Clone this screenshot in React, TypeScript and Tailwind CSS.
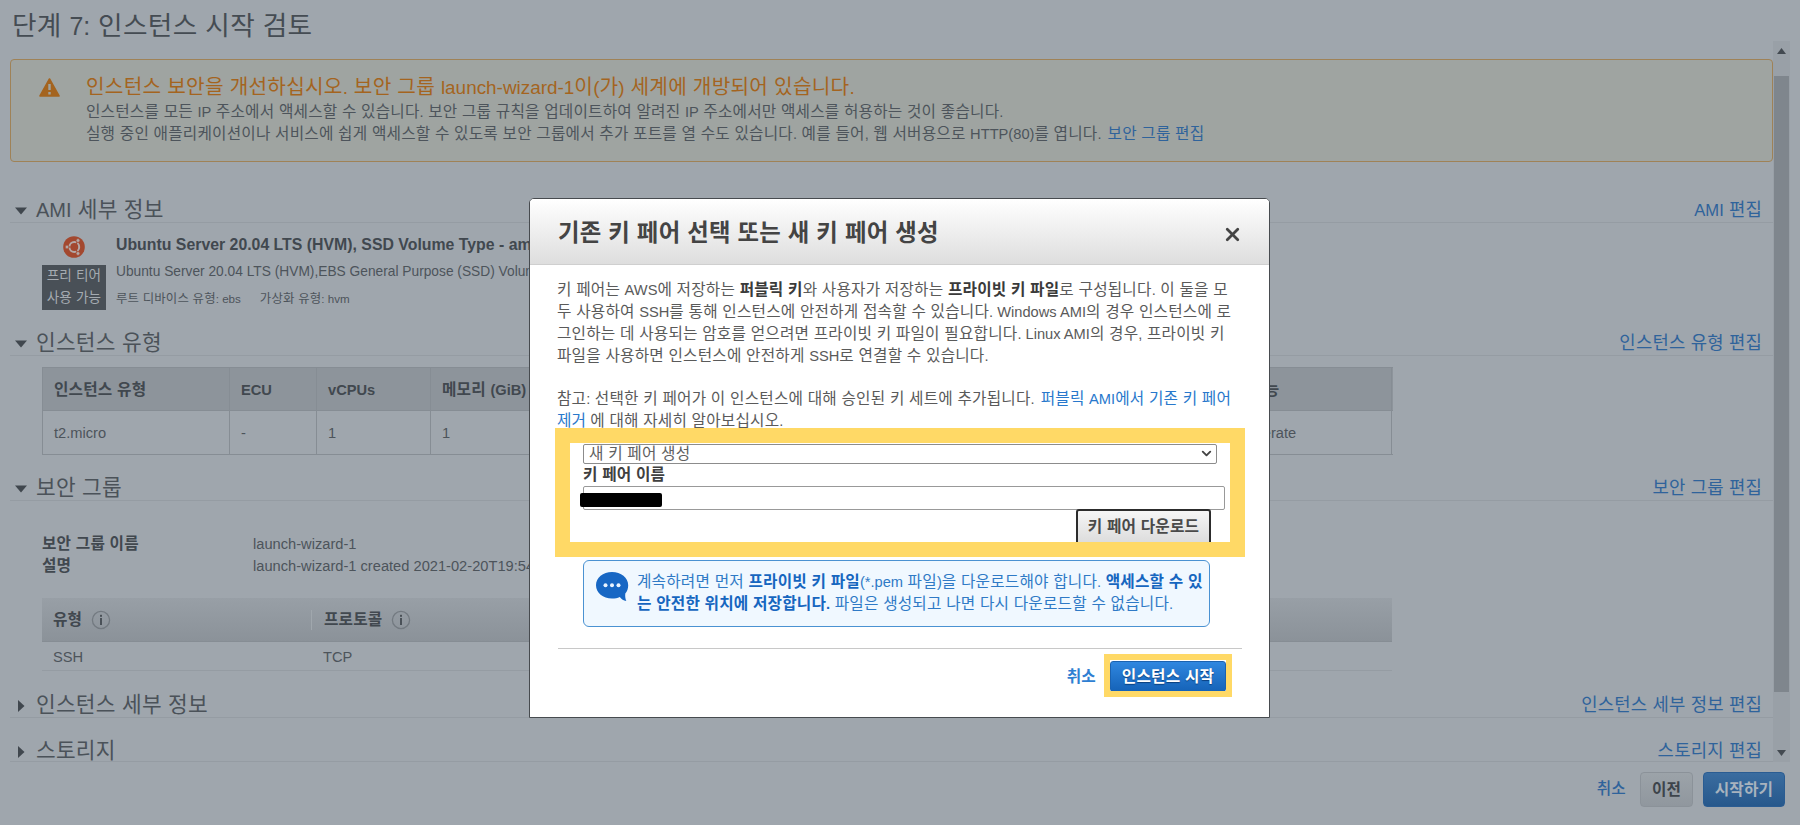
import type { ReactNode } from "react";
import { X, ChevronDown } from "lucide-react";

/** Mixed Korean / Latin text: Korean runs are set slightly larger than Latin ones. */
function T({ children, className = "" }: { children: string; className?: string }) {
  const runs = children.split(/([\x21-\x7e]+(?: [\x21-\x7e]+)*)/);
  return (
    <span className={`whitespace-pre ${className}`}>
      {runs.map((run, i) =>
        i % 2 ? (
          <span key={i}>{run}</span>
        ) : (
          <span key={i} className="text-[1.070em] leading-none tracking-[0.012em]">
            {run}
          </span>
        ),
      )}
    </span>
  );
}

function SectionHead({ title, link, open = false, className = "pt-[4px]" }: { title: string; link: string; open?: boolean; className?: string }) {
  return (
    <div className={`flex shrink-0 items-center justify-between border-b border-[#959ca3] pr-[11px] ${className}`}>
      <div className="flex items-center pl-[5px]">
        <svg width="12" height="12" viewBox="0 0 12 12" className="mr-[9px]" fill="#40474e">
          {open ? <path d="M0 2.5h12L6 9.5z" /> : <path d="M3 0l6.500 6L3 12z" />}
        </svg>
        <T className="text-[20px] text-[#4b5259]">{title}</T>
      </div>
      <T className="text-[16.600px] text-[#2f639b]">{link}</T>
    </div>
  );
}

function InfoIcon() {
  return (
    <svg width="20" height="20" viewBox="0 0 20 20" className="ml-[9px]">
      <circle cx="10" cy="10" r="8.600" fill="none" stroke="#737a81" strokeWidth="1.300" />
      <rect x="9" y="4.800" width="2" height="2" fill="#4a5158" />
      <rect x="9" y="8" width="2" height="7" fill="#4a5158" />
    </svg>
  );
}

function UbuntuIcon() {
  return (
    <svg width="22" height="22" viewBox="0 0 22 22">
      <circle cx="11" cy="11" r="10.800" fill="#a3482f" />
      <circle cx="11.300" cy="11" r="4.900" fill="none" stroke="#b3a8a6" strokeWidth="2" />
      <g stroke="#a3482f" strokeWidth="1.200">
        <path d="M11.300 11L4 11M11.300 11L15.300 4.200M11.300 11L15.300 17.800" />
      </g>
      <circle cx="11.300" cy="11" r="3.200" fill="#a3482f" />
      <g fill="#b3a8a6" stroke="#a3482f" strokeWidth="0.700">
        <circle cx="4" cy="11" r="1.900" />
        <circle cx="15" cy="4.500" r="1.900" />
        <circle cx="15" cy="17.500" r="1.900" />
      </g>
    </svg>
  );
}

function Cell({ children, className = "" }: { children?: ReactNode; className?: string }) {
  return <div className={`flex shrink-0 items-center border-r border-[#868d94] pl-[11px] pt-px ${className}`}>{children}</div>;
}

function Page() {
  return (
    <div className="flex h-[825px] w-[1800px] flex-col bg-[#9fa6ad]">
      <header className="flex h-[41px] shrink-0 items-center pl-[12px] pt-[11px]">
        <T className="text-[24.950px] leading-[32px] text-[#454c53]">단계 7: 인스턴스 시작 검토</T>
      </header>

      <div className="flex h-[721px] shrink-0">
        <main className="flex w-[1773px] flex-col overflow-hidden pl-[10px] pt-[18px]">
          <section className="flex h-[103px] shrink-0 rounded-[4px] border border-[#9f8257] bg-[#9fa4a1] pl-[28px]">
            <svg width="21" height="19" viewBox="0 0 21 19" className="mt-[18px] mr-[26px]">
              <path d="M10.500 1L20 18H1z" fill="#a4641f" stroke="#a4641f" strokeWidth="1.600" strokeLinejoin="round" />
              <path d="M10.500 6v6M10.500 14v2.400" stroke="#9fa4a1" strokeWidth="2.400" />
            </svg>
            <div className="flex flex-col pt-[15px]">
              <T className="text-[18.900px] leading-[26px] text-[#a4641f]">
                인스턴스 보안을 개선하십시오. 보안 그룹 launch-wizard-1이(가) 세계에 개방되어 있습니다.
              </T>
              <T className="leading-[22px]">
                인스턴스를 모든 IP 주소에서 액세스할 수 있습니다. 보안 그룹 규칙을 업데이트하여 알려진 IP 주소에서만 액세스를 허용하는 것이 좋습니다.
              </T>
              <div className="flex gap-[6px] leading-[22px]">
                <T>
                  실행 중인 애플리케이션이나 서비스에 쉽게 액세스할 수 있도록 보안 그룹에서 추가 포트를 열 수도 있습니다. 예를 들어, 웹 서버용으로 HTTP(80)를 엽니다.
                </T>
                <T className="text-[#2f639b]">보안 그룹 편집</T>
              </div>
            </div>
          </section>

          <SectionHead open title="AMI 세부 정보" link="AMI 편집" className="mt-[34px] h-[27px] pt-[4px]" />
          <div className="flex h-[106px] shrink-0 pl-[32px]">
            <div className="flex w-[64px] flex-col items-center pt-[13px]">
              <UbuntuIcon />
              <div className="mt-[7px] flex h-[45px] w-[64px] flex-col items-center bg-[#495057] text-[12.700px] leading-[22px] text-[#a5abb1]">
                <T>프리 티어</T>
                <T>사용 가능</T>
              </div>
            </div>
            <div className="flex flex-col pl-[10px] pt-[10px]">
              <T className="text-[15.850px] leading-[24px] font-bold text-[#41484f]">
                Ubuntu Server 20.04 LTS (HVM), SSD Volume Type - ami
              </T>
              <T className="mt-[3px] text-[13.750px] leading-[24px]">Ubuntu Server 20.04 LTS (HVM),EBS General Purpose (SSD) Volume</T>
              <div className="mt-[3px] flex gap-[19px] text-[11.600px] leading-[24px]">
                <T>루트 디바이스 유형: ebs</T>
                <T>가상화 유형: hvm</T>
              </div>
            </div>
          </div>

          <SectionHead open title="인스턴스 유형" link="인스턴스 유형 편집" className="h-[27px] pt-[4px]" />
          <div className="ml-[32px] mt-[11px] flex h-[88px] w-[1351px] shrink-0 flex-col border border-r-0 border-[#868d94]">
            <div className="flex h-[43px] border-b border-[#868d94] bg-[#8d949b] font-bold text-[#41484f]">
              <Cell className="w-[187px]"><T>인스턴스 유형</T></Cell>
              <Cell className="w-[87px]"><T>ECU</T></Cell>
              <Cell className="w-[114px]"><T>vCPUs</T></Cell>
              <Cell className="w-[130px]"><T>메모리 (GiB)</T></Cell>
              <Cell className="w-[615px]" />
              <Cell className="w-[216px]"><T>네트워크 성능</T></Cell>
            </div>
            <div className="flex flex-1">
              <Cell className="w-[187px]"><T>t2.micro</T></Cell>
              <Cell className="w-[87px]"><T>-</T></Cell>
              <Cell className="w-[114px]"><T>1</T></Cell>
              <Cell className="w-[130px]"><T>1</T></Cell>
              <Cell className="w-[615px]" />
              <Cell className="w-[216px]"><T>Low to Moderate</T></Cell>
            </div>
          </div>

          <SectionHead open title="보안 그룹" link="보안 그룹 편집" className="mt-[19px] h-[27px] pt-[4px]" />
          <div className="ml-[32px] mt-[32px] grid shrink-0 grid-cols-[211px_1fr] leading-[22px]">
            <T className="font-bold text-[#41484f]">보안 그룹 이름</T>
            <T>launch-wizard-1</T>
            <T className="font-bold text-[#41484f]">설명</T>
            <T>launch-wizard-1 created 2021-02-20T19:54</T>
          </div>

          <div className="ml-[32px] mt-[21px] flex w-[1350px] shrink-0 flex-col">
            <div className="flex h-[44px] items-center border-b border-[#868d94] bg-gradient-to-b from-[#989fa6] to-[#8b9299] font-bold text-[#41484f]">
              <div className="flex h-[20px] w-[270px] items-center border-r border-[#a0a7ad] pl-[11px]">
                <T>유형</T>
                <InfoIcon />
              </div>
              <div className="flex items-center pl-[12px]">
                <T>프로토콜</T>
                <InfoIcon />
              </div>
            </div>
            <div className="flex h-[29px] items-center border-b border-[#959ca3] pt-px">
              <T className="w-[270px] pl-[11px]">SSH</T>
              <T className="pl-[11px]">TCP</T>
            </div>
          </div>

          <SectionHead title="인스턴스 세부 정보" link="인스턴스 세부 정보 편집" className="mt-[20px] h-[27px] pt-[4px]" />
          <SectionHead title="스토리지" link="스토리지 편집" className="mt-[20px] h-[24px] pt-[5px]" />
        </main>

        <div className="flex w-[17px] flex-col items-center justify-between bg-[#99a0a7] pb-[6px]">
          <svg width="9" height="6" viewBox="0 0 9 6" className="mt-[7px] shrink-0" fill="#434a51">
            <path d="M4.500 0L9 6H0z" />
          </svg>
          <div className="mt-[22px] h-[616px] w-[15px] shrink-0 bg-[#7f868d]" />
          <svg width="9" height="6" viewBox="0 0 9 6" className="mt-auto shrink-0" fill="#434a51">
            <path d="M0 0h9L4.500 6z" />
          </svg>
        </div>
      </div>

      <footer className="flex flex-1 items-start justify-end pr-[15px] pt-[10px] font-bold">
        <T className="mr-[14px] leading-[34px] font-medium text-[#2f639b]">취소</T>
        <div className="mr-[10px] flex h-[35px] w-[53px] items-center justify-center rounded-[4px] border border-[#8b9299] bg-gradient-to-b from-[#9ca3a9] to-[#90979e] text-[#3d444b]">
          <T>이전</T>
        </div>
        <div className="flex h-[35px] w-[82px] items-center justify-center rounded-[4px] border border-[#2a5c92] bg-gradient-to-b from-[#3a6c9f] to-[#27588c] text-[#a8b3be]">
          <T>시작하기</T>
        </div>
      </footer>
    </div>
  );
}

function Modal() {
  return (
    <div className="absolute left-[529px] top-[198px] flex h-[520px] w-[741px] flex-col rounded-t-[5px] border border-[#474b4f] bg-white text-[#5a5a5a]">
      <div className="flex h-[66px] shrink-0 items-center justify-between rounded-t-[4px] border-b border-[#cfcfcf] bg-gradient-to-b from-white to-[#dedede] pl-[28px] pr-[26px]">
        <T className="pt-[4px] text-[21.850px] font-bold text-[#444]">기존 키 페어 선택 또는 새 키 페어 생성</T>
        <X size={21} strokeWidth={3.200} color="#444" className="mt-[6px]" />
      </div>

      <div className="flex flex-col pl-[27px] pt-[15px] leading-[21.850px]">
        <div>
          <T>키 페어는 AWS에 저장하는 </T>
          <T className="font-bold text-[#3a3a3a]">퍼블릭 키</T>
          <T>와 사용자가 저장하는 </T>
          <T className="font-bold text-[#3a3a3a]">프라이빗 키 파일</T>
          <T>로 구성됩니다. 이 둘을 모</T>
        </div>
        <T>두 사용하여 SSH를 통해 인스턴스에 안전하게 접속할 수 있습니다. Windows AMI의 경우 인스턴스에 로</T>
        <T>그인하는 데 사용되는 암호를 얻으려면 프라이빗 키 파일이 필요합니다. Linux AMI의 경우, 프라이빗 키</T>
        <T>파일을 사용하면 인스턴스에 안전하게 SSH로 연결할 수 있습니다.</T>
        <div className="mt-[21.850px] flex gap-[6px]">
          <T>참고: 선택한 키 페어가 이 인스턴스에 대해 승인된 키 세트에 추가됩니다.</T>
          <T className="text-[#2878cc]">퍼블릭 AMI에서 기존 키 페어</T>
        </div>
        <div className="flex gap-[4px]">
          <T className="text-[#2878cc]">제거</T>
          <T>에 대해 자세히 알아보십시오.</T>
        </div>
      </div>

      <div className="ml-[53px] mt-[11px] flex flex-col">
        <div className="flex h-[20px] w-[634px] shrink-0 items-center justify-between rounded-[2px] border border-[#8c8c8c] pl-[5px] pr-[2px] text-[#606060]">
          <T>새 키 페어 생성</T>
          <ChevronDown size={15} strokeWidth={3} color="#444" />
        </div>
        <T className="h-[22px] leading-[22px] font-bold text-[#404040]">키 페어 이름</T>
        <div className="h-[24px] w-[642px] rounded-[2px] border border-[#999]" />
        <div className="ml-[493px] -mt-px flex h-[36px] w-[135px] items-center justify-center rounded-t-[3px] border-2 border-[#2c2c2c] bg-gradient-to-b from-[#f6f6f6] to-[#dcdcdc] font-bold text-[#4a4a4a]">
          <T>키 페어 다운로드</T>
        </div>
        <div className="mt-[15px] flex h-[67px] w-[627px] shrink-0 rounded-[6px] border border-[#4a92d2] bg-[#f0f8ff] pl-[12px] text-[#2f7ac6]">
          <svg width="33" height="30" viewBox="0 0 33 30" className="mr-[8px] mt-[11px]">
            <path d="M16 0C7 0 0 5.700 0 13.200S7 26.500 16 26.500c3 0 5.500-.5 7.800-1.600C25.500 27 27.500 28.500 30.300 29c-1-2.500-1.300-5-1-7.500C31.300 19.200 32.200 16.200 32.200 13.200 32.200 5.700 25 0 16 0z" fill="#1767c4" />
            <g fill="#eaf4ff">
              <circle cx="9.500" cy="13.300" r="2" />
              <circle cx="16" cy="13.300" r="2" />
              <circle cx="22.500" cy="13.300" r="2" />
            </g>
          </svg>
          <div className="flex flex-col pt-[11px] leading-[21.850px]">
            <div>
              <T>계속하려면 먼저 </T>
              <T className="font-bold text-[#1666bf]">프라이빗 키 파일</T>
              <T>(*.pem 파일)을 다운로드해야 합니다. </T>
              <T className="font-bold text-[#1666bf]">액세스할 수 있</T>
            </div>
            <div>
              <T className="font-bold text-[#1666bf]">는 안전한 위치에 저장합니다.</T>
              <T> 파일은 생성되고 나면 다시 다운로드할 수 없습니다.</T>
            </div>
          </div>
        </div>
      </div>

      <div className="ml-[28px] mt-[21px] w-[684px] border-t border-[#c8c8c8]" />
      <div className="flex items-center justify-end pr-[43px] pt-[12px] font-bold">
        <T className="mr-[14px] text-[#2f7fd2]">취소</T>
        <div className="flex h-[31px] w-[116px] items-center justify-center rounded-[3px] border border-[#1b62b0] bg-gradient-to-b from-[#2f87e0] to-[#1563b8] text-white [text-shadow:0_1px_1px_#0b3f7c]">
          <T>인스턴스 시작</T>
        </div>
      </div>

      <div className="absolute left-[25px] top-[229px] h-[129px] w-[690px] border-[15px] border-[#ffd966]" />
      <div className="absolute left-[50px] top-[294px] h-[14px] w-[82px] rounded-[2px] bg-black" />
      <div className="absolute left-[574px] top-[455px] h-[43px] w-[128px] border-[6px] border-[#ffd966]" />
    </div>
  );
}

export default function App() {
  return (
    <div className="relative h-[825px] w-[1800px] overflow-hidden font-['Liberation_Sans','Noto_Sans_CJK_KR',sans-serif] text-[14.670px] leading-none text-[#4d545b]">
      <Page />
      <Modal />
    </div>
  );
}
